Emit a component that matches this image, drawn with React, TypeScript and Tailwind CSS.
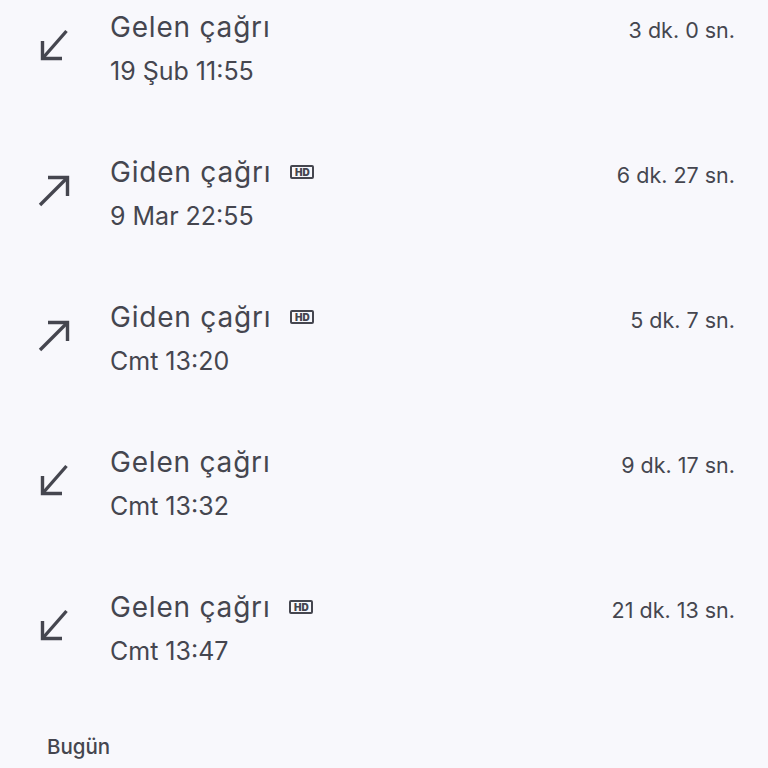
import React from 'react';

type Call = {
  direction: 'in' | 'out';
  title: string;
  when: string;
  duration: string;
  hd: boolean;
};

const CALLS: Call[] = [
  { direction: 'in', title: 'Gelen çağrı', when: '19 Şub 11:55', duration: '3 dk. 0 sn.', hd: false },
  { direction: 'out', title: 'Giden çağrı', when: '9 Mar 22:55', duration: '6 dk. 27 sn.', hd: true },
  { direction: 'out', title: 'Giden çağrı', when: 'Cmt 13:20', duration: '5 dk. 7 sn.', hd: true },
  { direction: 'in', title: 'Gelen çağrı', when: 'Cmt 13:32', duration: '9 dk. 17 sn.', hd: false },
  { direction: 'in', title: 'Gelen çağrı', when: 'Cmt 13:47', duration: '21 dk. 13 sn.', hd: true },
];

function DirectionIcon({ direction }: { direction: Call['direction'] }) {
  return (
    <svg width="40" height="40" viewBox="0 0 40 40" fill="none" stroke="#45464f" strokeWidth="3.4" strokeLinejoin="miter">
      {direction === 'in' ? (
        <>
          <path d="M10.5 12 V29.5 H30" />
          <path d="M10.5 29.5 L34.5 2" />
        </>
      ) : (
        <>
          <path d="M16 3.5 H35.5 V22" />
          <path d="M35.5 3.5 L8 31" />
        </>
      )}
    </svg>
  );
}

function HdBadge() {
  return (
    <span className="ml-[19px] inline-flex h-[14px] w-[24px] items-center justify-center self-center rounded-[2px] border-2 border-[#45464f] text-[10px] font-black leading-none text-[#45464f]">
      HD
    </span>
  );
}

function CallRow({ call }: { call: Call }) {
  return (
    <div className="flex h-[145px] items-center">
      <div className="ml-[32px] w-[40px] shrink-0">
        <DirectionIcon direction={call.direction} />
      </div>
      <div className="ml-[38px] mr-[33px] flex flex-1 flex-col">
        <div className="flex items-baseline justify-between">
          <div className="flex items-center">
            <span className="text-[28px] leading-[36px] tracking-[0.8px]">{call.title}</span>
            {call.hd && <HdBadge />}
          </div>
          <span className="relative top-[1px] text-[21.5px] leading-[30px]">{call.duration}</span>
        </div>
        <span className="mt-[9px] text-[25px] leading-[34px]">{call.when}</span>
      </div>
    </div>
  );
}

export default function App() {
  return (
    <div
      className="h-[768px] w-[768px] overflow-hidden bg-[#f8f8fc] text-[#45464f]"
      style={{ fontFamily: 'Inter, Roboto, sans-serif' }}
    >
      <div className="-mt-[24px]">
        {CALLS.map((call, index) => (
          <CallRow key={index} call={call} />
        ))}
      </div>
      <div className="ml-[47px] mt-[34px] text-[20.5px] font-medium leading-[24px]">Bugün</div>
    </div>
  );
}
